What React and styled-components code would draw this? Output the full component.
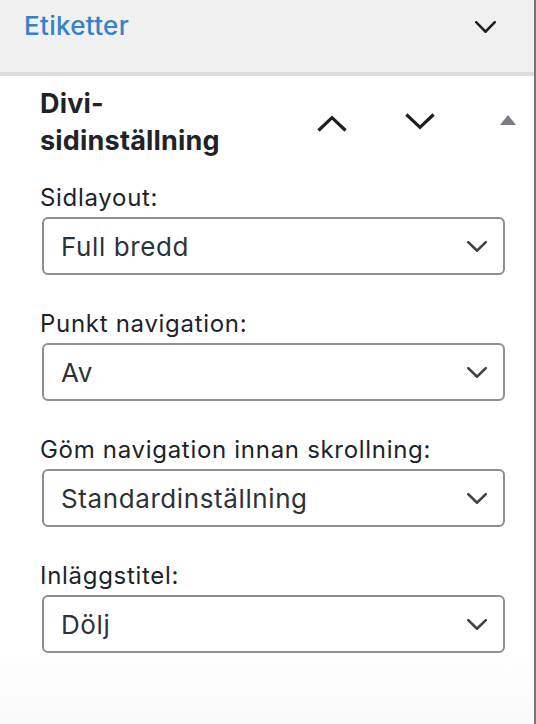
import React from "react";
import styled, { createGlobalStyle } from "styled-components";

const Global = createGlobalStyle`
  html, body { margin: 0; padding: 0; background: #fff; }
  body { font-family: Inter, "Noto Sans", "Liberation Sans", sans-serif; }
`;

const Frame = styled.div`
  width: 536px;
  height: 724px;
  box-sizing: border-box;
  border-right: 2px solid #76767a;
  overflow: hidden;
  background: linear-gradient(to bottom, #ffffff 0, #ffffff 650px, #f9f9f9 724px);
  display: flex;
  flex-direction: column;
`;

const CollapsedPanel = styled.div`
  height: 76px;
  box-sizing: border-box;
  flex-shrink: 0;
  background: #f0f0f0;
  border-bottom: 4px solid #dcdcdc;
  display: flex;
  align-items: flex-start;
  justify-content: space-between;
  padding: 8px 38px 0 24px;
`;

const PanelTitle = styled.span`
  color: #3582c4;
  font-size: 26px;
  font-weight: 500;
  line-height: 36px;
  letter-spacing: 0.3px;
`;

const PanelToggle = styled.span`
  display: flex;
  align-items: center;
  height: 36px;
  padding-top: 1px;
`;

const Box = styled.section`
  padding: 9px 0 0 40px;
  display: flex;
  flex-direction: column;
`;

const BoxHeader = styled.div`
  display: flex;
  align-items: center;
  justify-content: space-between;
  padding-right: 4px;
`;

const BoxTitle = styled.h2`
  margin: 0;
  width: 210px;
  font-size: 27px;
  font-weight: 700;
  line-height: 37px;
  letter-spacing: 0.2px;
  color: #1d2327;
`;

const Handles = styled.div`
  display: flex;
  gap: 44px;
`;

const Handle = styled.span`
  width: 44px;
  height: 30px;
  display: flex;
  align-items: center;
  justify-content: center;
`;

const Fields = styled.div`
  display: flex;
  flex-direction: column;
  gap: 35px;
  margin-top: 25px;
  padding-right: 29px;
`;

const Field = styled.div`
  display: flex;
  flex-direction: column;
  gap: 5px;
`;

const Label = styled.label`
  font-size: 24px;
  line-height: 28px;
  letter-spacing: 0.7px;
  color: #1d2327;
`;

const Select = styled.div`
  height: 58px;
  box-sizing: border-box;
  margin-left: 2px;
  border: 2px solid #8c8f94;
  border-radius: 6px;
  display: flex;
  align-items: center;
  justify-content: space-between;
  padding: 0 16px 0 17px;
  font-size: 26px;
  letter-spacing: 0.6px;
  color: #2c3338;
  background: #fff;
`;

const Chevron = ({ up, w = 20, h = 12, sw = 2.6, color = "#1e1e1e" }) => (
  <svg width={w} height={h} viewBox={`0 0 ${w} ${h}`} fill="none">
    <path
      d={
        up
          ? `M${sw / 2} ${h - sw / 2} L${w / 2} ${sw / 2} L${w - sw / 2} ${h - sw / 2}`
          : `M${sw / 2} ${sw / 2} L${w / 2} ${h - sw / 2} L${w - sw / 2} ${sw / 2}`
      }
      stroke={color}
      strokeWidth={sw}
      strokeLinecap="square"
    />
  </svg>
);

/* handle icons drawn in a shared 30x30 box so they sit at their own heights */
const UpHandle = () => (
  <svg width="30" height="30" viewBox="0 0 30 30" fill="none">
    <path d="M2.6 22.4 L15 10.6 L27.4 22.4" stroke="#1e1e1e" strokeWidth="3.2" strokeLinecap="square" />
  </svg>
);

const DownHandle = () => (
  <svg width="30" height="30" viewBox="0 0 30 30" fill="none">
    <path d="M2.6 8.6 L15 20.4 L27.4 8.6" stroke="#1e1e1e" strokeWidth="3.2" strokeLinecap="square" />
  </svg>
);

const TriangleHandle = () => (
  <svg width="30" height="30" viewBox="0 0 30 30">
    <path d="M15 8 L23 18 L7 18 Z" fill="#787c82" />
  </svg>
);

const fields = [
  ["Sidlayout:", "Full bredd"],
  ["Punkt navigation:", "Av"],
  ["Göm navigation innan skrollning:", "Standardinställning"],
  ["Inläggstitel:", "Dölj"],
];

export default function App() {
  return (
    <>
      <Global />
      <Frame>
        <CollapsedPanel>
          <PanelTitle>Etiketter</PanelTitle>
          <PanelToggle>
            <Chevron w={21} h={12} sw={2.6} />
          </PanelToggle>
        </CollapsedPanel>
        <Box>
          <BoxHeader>
            <BoxTitle>Divi-sidinställning</BoxTitle>
            <Handles>
              <Handle>
                <UpHandle />
              </Handle>
              <Handle>
                <DownHandle />
              </Handle>
              <Handle>
                <TriangleHandle />
              </Handle>
            </Handles>
          </BoxHeader>
          <Fields>
            {fields.map(([label, value]) => (
              <Field key={label}>
                <Label>{label}</Label>
                <Select>
                  <span>{value}</span>
                  <Chevron w={20} h={11} sw={2.6} color="#3c434a" />
                </Select>
              </Field>
            ))}
          </Fields>
        </Box>
      </Frame>
    </>
  );
}
